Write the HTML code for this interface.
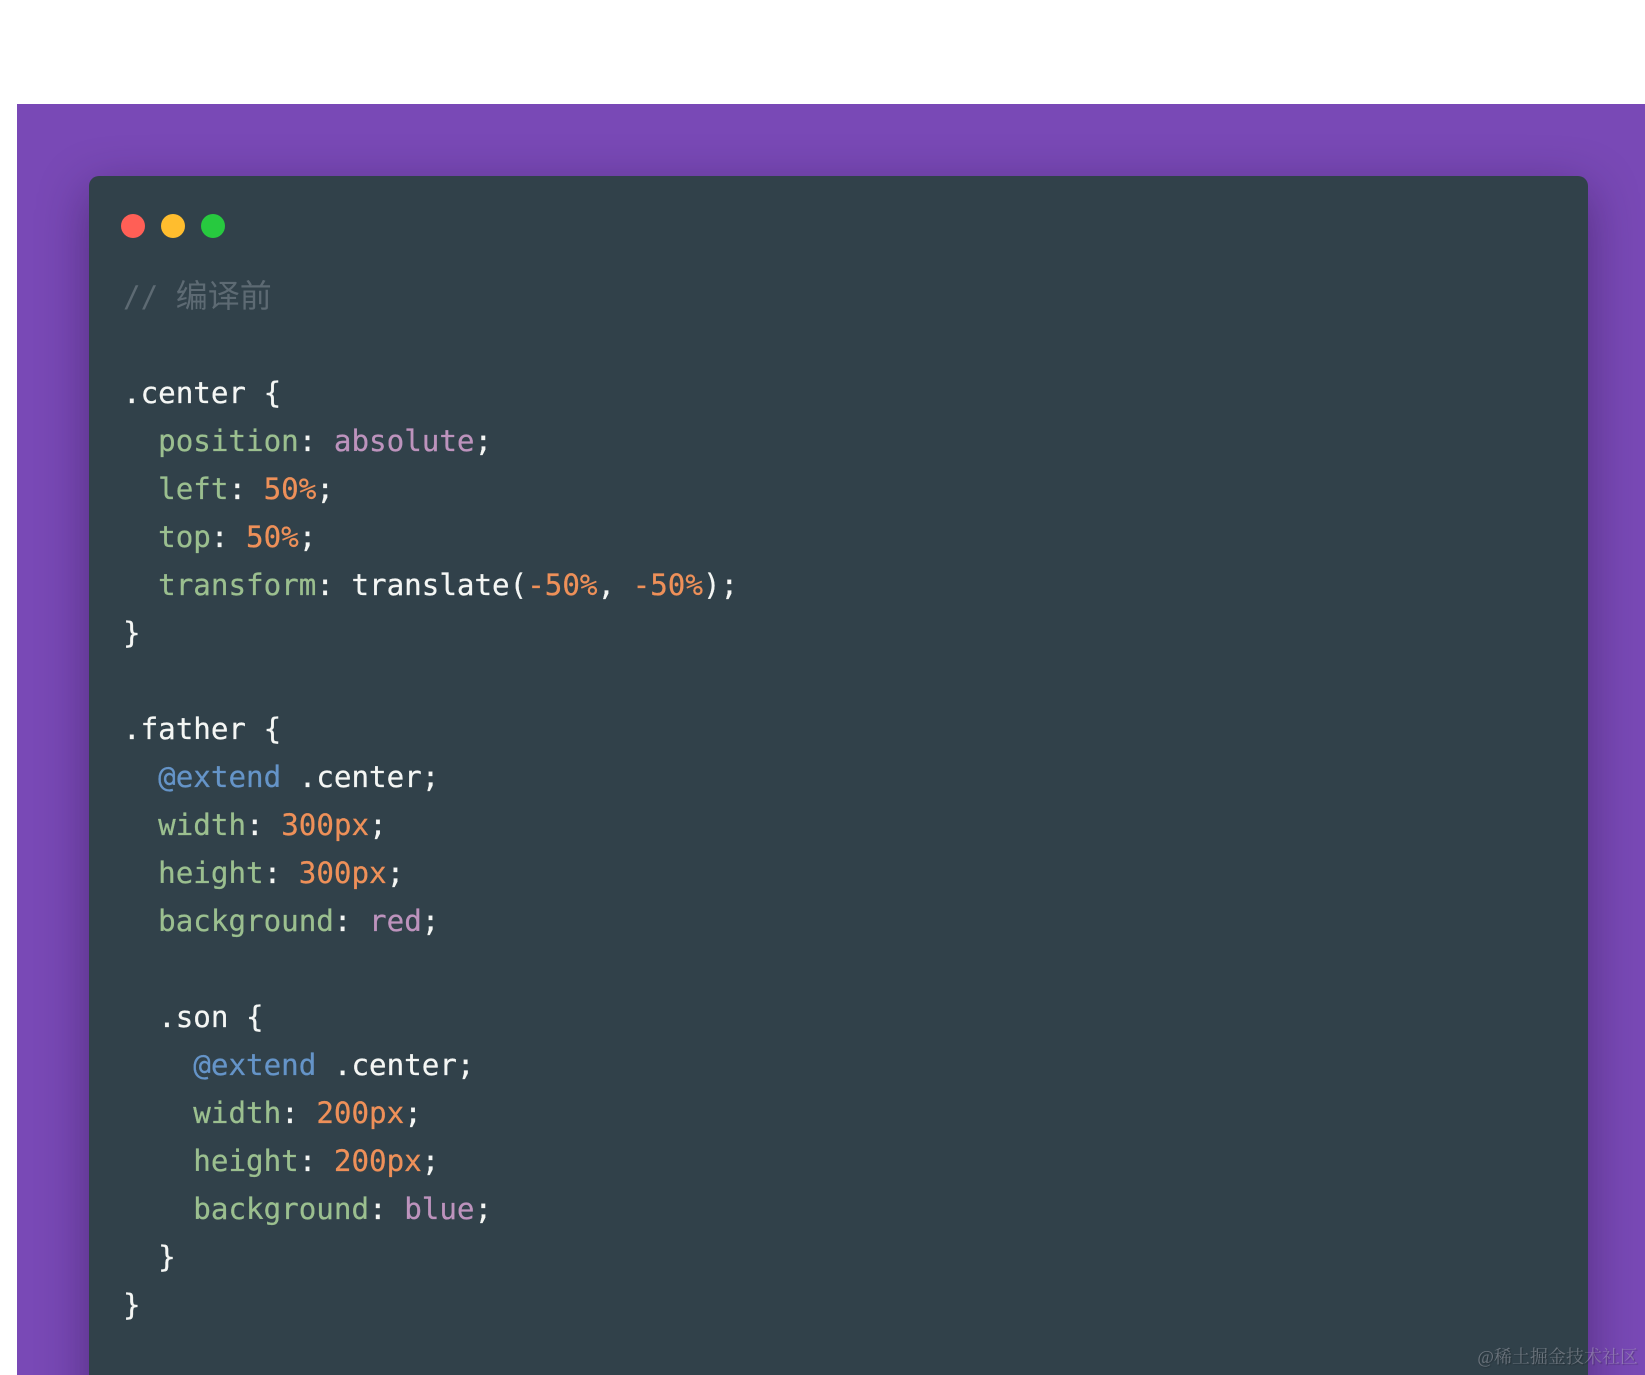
<!DOCTYPE html>
<html lang="zh">
<head>
<meta charset="utf-8">
<title>Code</title>
<style>
html,body{margin:0;padding:0;background:#fff;width:1645px;height:1375px;overflow:hidden}
.bg{position:absolute;left:17px;top:104px;width:1628px;height:1271px;background:#7949b6;overflow:hidden}
.card{position:absolute;left:72px;top:72px;width:1499px;height:1240px;background:#31414a;border-radius:10px;box-shadow:0 14px 50px rgba(30,10,50,.42)}
.dot{position:absolute;top:214px;width:24px;height:24px;border-radius:50%;z-index:2}
pre{position:absolute;left:123px;top:273px;height:1102px;overflow:hidden;margin:0;z-index:2;font-family:"DejaVu Sans Mono","Noto Sans CJK SC",monospace;font-size:29.2px;line-height:48px;color:#f4f6f4;-webkit-text-stroke:.25px currentColor}
.c{color:#5d6a73;-webkit-text-stroke:0}
.g{color:#9bbf8f}
.o{color:#ee9059}
.p{color:#bd93bd}
.b{color:#6594c8}
.cjk{font-family:"Noto Sans CJK SC",sans-serif;font-size:32px;line-height:40px}
.wm{position:absolute;right:7px;top:1345px;z-index:3;font-family:"Liberation Serif","Noto Serif CJK SC",serif;font-size:18px;line-height:24px;color:rgba(190,190,200,.42);white-space:nowrap;text-shadow:1px 1px 1px rgba(0,0,0,.25)}
</style>
</head>
<body>
<div class="bg"><div class="card"></div></div>
<div class="dot" style="left:121px;background:#ff5f56"></div>
<div class="dot" style="left:161px;background:#ffbd2e"></div>
<div class="dot" style="left:201px;background:#27c93f"></div>
<pre><span class="c">// <span class="cjk">编译前</span></span>

.center {
  <span class="g">position</span>: <span class="p">absolute</span>;
  <span class="g">left</span>: <span class="o">50%</span>;
  <span class="g">top</span>: <span class="o">50%</span>;
  <span class="g">transform</span>: translate(<span class="o">-50%</span>, <span class="o">-50%</span>);
}

.father {
  <span class="b">@extend</span> .center;
  <span class="g">width</span>: <span class="o">300px</span>;
  <span class="g">height</span>: <span class="o">300px</span>;
  <span class="g">background</span>: <span class="p">red</span>;

  .son {
    <span class="b">@extend</span> .center;
    <span class="g">width</span>: <span class="o">200px</span>;
    <span class="g">height</span>: <span class="o">200px</span>;
    <span class="g">background</span>: <span class="p">blue</span>;
  }
}</pre>
<div class="wm">@稀土掘金技术社区</div>
</body>
</html>
